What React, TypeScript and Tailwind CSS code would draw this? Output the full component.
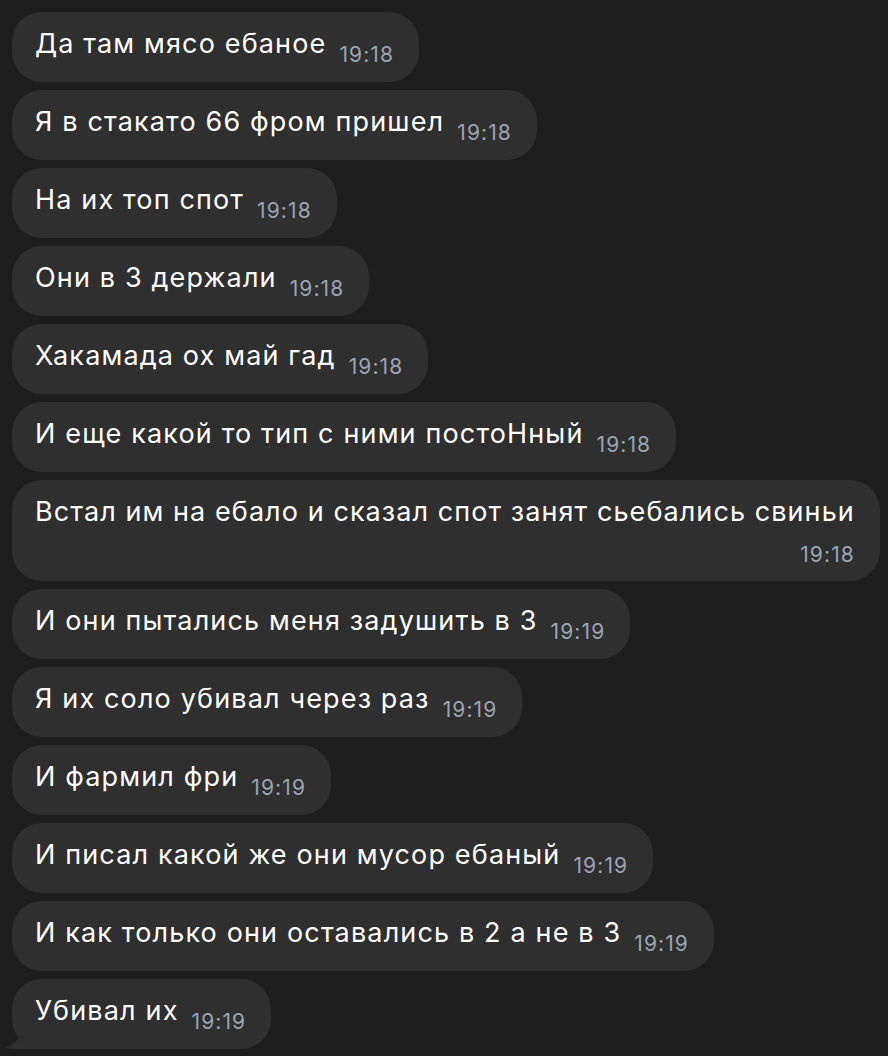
import React from 'react';

type Msg = { text: string; time: string; wide?: boolean };

const messages: Msg[] = [
  { text: 'Да там мясо ебаное', time: '19:18' },
  { text: 'Я в стакато 66 фром пришел', time: '19:18' },
  { text: 'На их топ спот', time: '19:18' },
  { text: 'Они в 3 держали', time: '19:18' },
  { text: 'Хакамада ох май гад', time: '19:18' },
  { text: 'И еще какой то тип с ними постоНный', time: '19:18' },
  { text: 'Встал им на ебало и сказал спот занят сьебались свиньи', time: '19:18', wide: true },
  { text: 'И они пытались меня задушить в 3', time: '19:19' },
  { text: 'Я их соло убивал через раз', time: '19:19' },
  { text: 'И фармил фри', time: '19:19' },
  { text: 'И писал какой же они мусор ебаный', time: '19:19' },
  { text: 'И как только они оставались в 2 а не в 3', time: '19:19' },
  { text: 'Убивал их', time: '19:19' },
];

function Bubble({ msg, last }: { msg: Msg; last: boolean }) {
  if (msg.wide) {
    return (
      <div className="bg-[#2f2f2f] rounded-[30px] pl-[23px] pr-[25px] pt-[15px] pb-[13px]">
        <div className="text-[27px] leading-[34px] tracking-[1.08px] text-white whitespace-nowrap">{msg.text}</div>
        <div className="text-right text-[21px] leading-[26px] tracking-[1.1px] text-[#9aa4b2] mt-[13px]">{msg.time}</div>
      </div>
    );
  }
  return (
    <div className="relative">
      <div className="relative z-10 bg-[#2f2f2f] rounded-[30px] h-[70px] pl-[23px] pr-[25px] flex items-baseline pt-[15px]">
        <span className="text-[27px] leading-[34px] tracking-[1.15px] text-white whitespace-nowrap">{msg.text}</span>
        <span className="relative top-[9px] ml-[13px] text-[21px] leading-[26px] tracking-[1.1px] text-[#9aa4b2]">{msg.time}</span>
      </div>
      {last && (
        <svg className="absolute left-[-8px] bottom-0 z-0" width="40" height="40" viewBox="0 0 40 40">
          <path d="M20 0 L40 0 L40 40 L14 40 C 9 40 4 39.5 2 38.5 C 9 36 18 30 20 14 Z" fill="#2f2f2f" />
        </svg>
      )}
    </div>
  );
}

export default function App() {
  return (
    <div
      className="w-[888px] h-[1056px] bg-[#1e1e1e] overflow-hidden px-3 pt-3 flex flex-col items-start gap-2"
      style={{ fontFamily: 'Inter, "Noto Sans", sans-serif' }}
    >
      {messages.map((m, i) => (
        <Bubble key={i} msg={m} last={i === messages.length - 1} />
      ))}
    </div>
  );
}
